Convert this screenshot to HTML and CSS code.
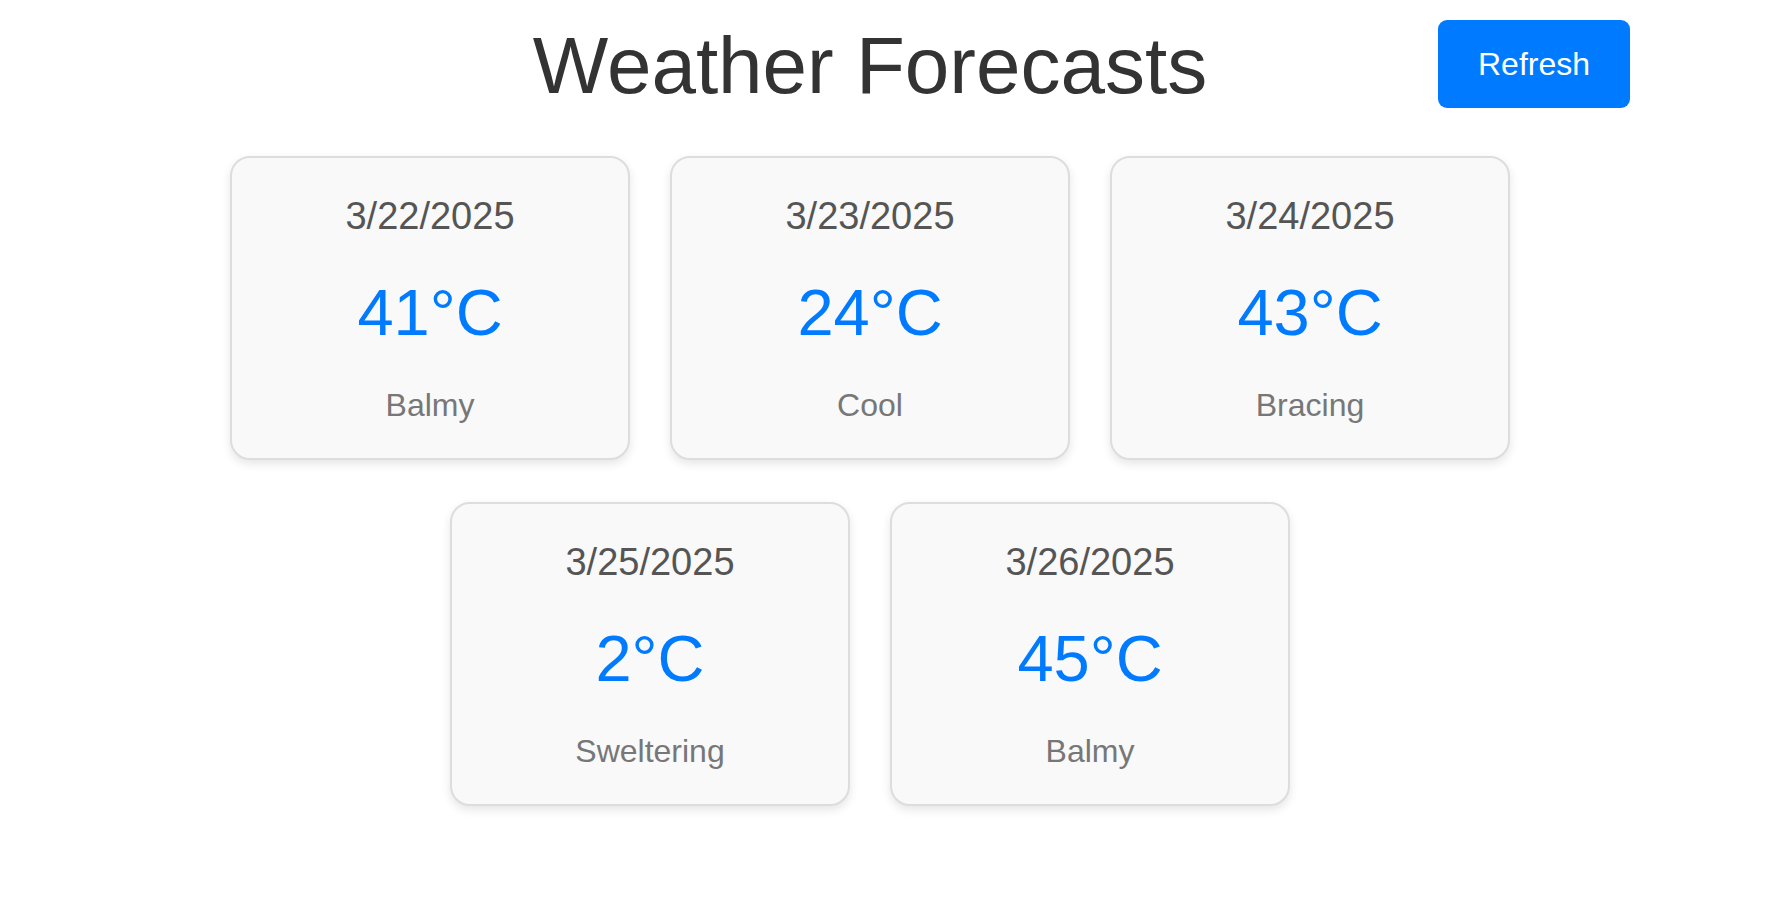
FILE: index.html
```html
<!DOCTYPE html>
<html lang="en">
<head>
<meta charset="utf-8">
<title>Weather Forecasts</title>
<link rel="stylesheet" href="styles.css">
</head>
<body>
<div class="app">
  <header class="header">
    <div class="spacer"></div>
    <h1 class="title">Weather Forecasts</h1>
    <div class="actions"><button class="refresh">Refresh</button></div>
  </header>
  <main class="grid">
    <div class="card"><div class="date">3/22/2025</div><div class="temp">41°C</div><div class="summary">Balmy</div></div>
    <div class="card"><div class="date">3/23/2025</div><div class="temp">24°C</div><div class="summary">Cool</div></div>
    <div class="card"><div class="date">3/24/2025</div><div class="temp">43°C</div><div class="summary">Bracing</div></div>
    <div class="card"><div class="date">3/25/2025</div><div class="temp">2°C</div><div class="summary">Sweltering</div></div>
    <div class="card"><div class="date">3/26/2025</div><div class="temp">45°C</div><div class="summary">Balmy</div></div>
  </main>
</div>
</body>
</html>
```
FILE: styles.css
```css
html, body {
  margin: 0;
  padding: 0;
  background: #fff;
  font-family: "Liberation Sans", Arial, Helvetica, sans-serif;
}

.app {
  padding: 20px 48px 40px 0;
}

.header {
  display: grid;
  grid-template-columns: 1fr auto 1fr;
  align-items: center;
}

.title {
  margin: 0;
  font-size: 80px;
  line-height: 92px;
  font-weight: normal;
  color: #333;
  text-align: center;
}

.actions {
  display: flex;
  justify-content: flex-end;
  padding-right: 110px;
}

.refresh {
  width: 192px;
  height: 88px;
  margin-top: -4px;
  border: none;
  border-radius: 9px;
  background: #007bff;
  color: #fff;
  font-family: "Liberation Sans", Arial, Helvetica, sans-serif;
  font-size: 32px;
  cursor: pointer;
}

.grid {
  display: flex;
  flex-wrap: wrap;
  justify-content: center;
  column-gap: 40px;
  row-gap: 42px;
  width: 1280px;
  margin: 44px auto 0;
}

.card {
  box-sizing: border-box;
  width: 400px;
  height: 304px;
  padding: 36px 0 0;
  background: #f9f9f9;
  border: 2px solid #ddd;
  border-radius: 20px;
  box-shadow: 0 4px 10px rgba(0, 0, 0, 0.1);
  text-align: center;
}

.date {
  font-size: 38px;
  line-height: 44px;
  color: #555;
}

.temp {
  margin-top: 38px;
  font-size: 65px;
  line-height: 74px;
  color: #007bff;
}

.summary {
  margin-top: 37px;
  font-size: 32px;
  line-height: 36px;
  color: #777;
}
```
